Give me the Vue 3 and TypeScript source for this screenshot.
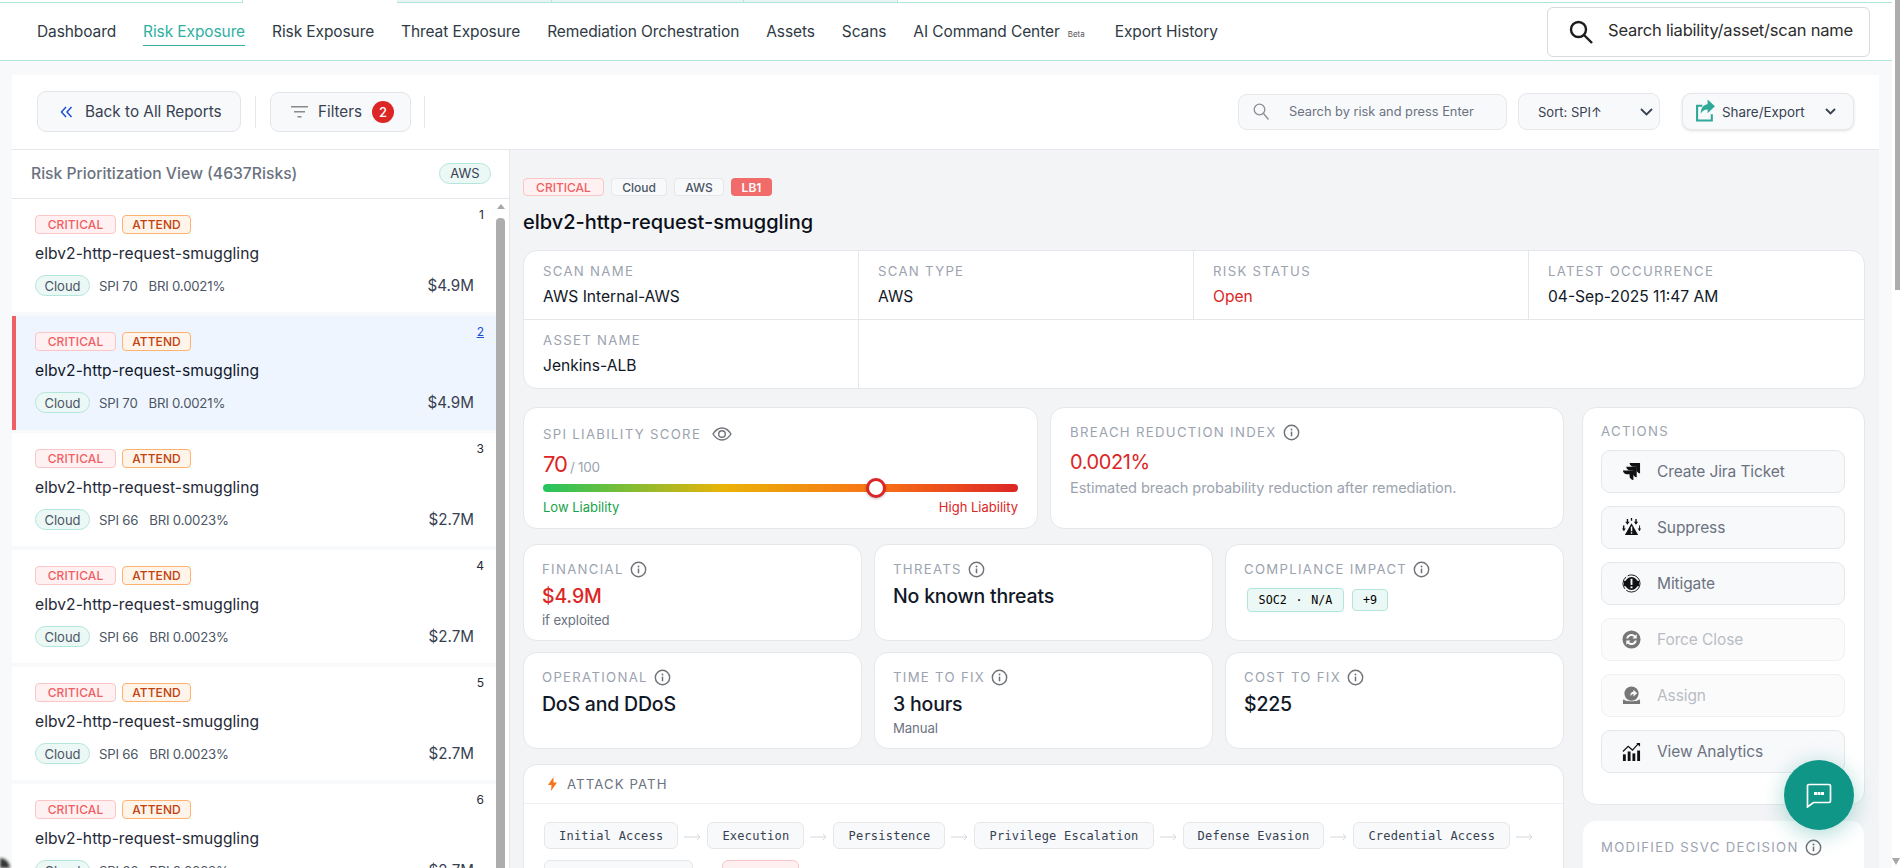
<script setup lang="ts">
interface Risk { n: number; spi: number; bri: string; price: string; active?: boolean }
const navs = ['Risk Exposure', 'Threat Exposure', 'Remediation Orchestration', 'Assets', 'Scans']
const risks: Risk[] = [
  { n: 1, spi: 70, bri: '0.0021%', price: '$4.9M' },
  { n: 2, spi: 70, bri: '0.0021%', price: '$4.9M', active: true },
  { n: 3, spi: 66, bri: '0.0023%', price: '$2.7M' },
  { n: 4, spi: 66, bri: '0.0023%', price: '$2.7M' },
  { n: 5, spi: 66, bri: '0.0023%', price: '$2.7M' },
  { n: 6, spi: 66, bri: '0.0023%', price: '$2.7M' },
]
const info = [
  { k: 'SCAN NAME', v: 'AWS Internal-AWS' },
  { k: 'SCAN TYPE', v: 'AWS' },
  { k: 'RISK STATUS', v: 'Open', red: true },
  { k: 'LATEST OCCURRENCE', v: '04-Sep-2025 11:47 AM' },
]
const actions = [
  { t: 'Create Jira Ticket', i: 'i-jira' },
  { t: 'Suppress', i: 'i-suppress' },
  { t: 'Mitigate', i: 'i-mitigate' },
  { t: 'Force Close', i: 'i-close', off: true },
  { t: 'Assign', i: 'i-assign', off: true },
  { t: 'View Analytics', i: 'i-chart' },
]
const chain = ['Initial Access', 'Execution', 'Persistence', 'Privilege Escalation', 'Defense Evasion', 'Credential Access']
const spi = 70
</script>

<template>
  <div class="page">
    <svg class="sprite" aria-hidden="true">
      <symbol id="i-info" viewBox="0 0 18 18">
        <circle cx="9" cy="9" r="7.6" fill="none" stroke="currentColor" stroke-width="1.5" />
        <rect x="8.2" y="8" width="1.6" height="5" fill="currentColor" />
        <circle cx="9" cy="5.8" r="1" fill="currentColor" />
      </symbol>
      <symbol id="i-jira" viewBox="0 0 20 20">
        <path d="M8 1h11v11c-2 0-4-2-4-4V5h-3C10 5 8 3 8 1Z" />
        <path d="M4.500 5h11v11c-2 0-4-2-4-4V9h-3C6.500 9 4.500 7 4.500 5Z" />
        <path d="M1 9h11v10c-2 0-4-2-4-4v-2H5C3 13 1 11 1 9Z" />
      </symbol>
      <symbol id="i-suppress" viewBox="0 0 20 20">
        <path d="M10 5.500 17 18H3Z" />
        <rect x="9.300" y="9" width="1.500" height="5" fill="#f8f9fb" />
        <rect x="9.300" y="15" width="1.500" height="1.500" fill="#f8f9fb" />
        <path d="M5 1h1.500v3H8L5.700 7 3.500 4H5ZM14 1h1.500v3H17l-2.300 3-2.200-3H14ZM9.300 0h1.400v3H9.300ZM1 8h1.500v3H4l-2 3-2-3h1ZM18 8h1v3h1l-1.500 3-2-3H18Z" />
      </symbol>
      <symbol id="i-mitigate" viewBox="0 0 20 20">
        <circle cx="10" cy="10" r="9" fill="none" stroke="currentColor" stroke-width="1" stroke-dasharray="20 2 14 2" />
        <circle cx="10" cy="10" r="6.800" />
        <rect x="2" y="7" width="3" height="6" rx="1" />
        <rect x="15" y="7" width="3" height="6" rx="1" />
        <rect x="9" y="5" width="2" height="6.500" fill="#f8f9fb" />
        <rect x="9" y="13" width="2" height="2" fill="#f8f9fb" />
      </symbol>
      <symbol id="i-close" viewBox="0 0 20 20">
        <circle cx="10" cy="10" r="9.500" />
        <path d="M4.500 9A5.600 5.600 0 0 1 14 5.800L15.500 4.500V9H11l1.600-1.700A3.700 3.700 0 0 0 6.500 9ZM15.500 11A5.600 5.600 0 0 1 6 14.200L4.500 15.500V11H9l-1.600 1.700A3.700 3.700 0 0 0 13.500 11Z" fill="#fbfbfc" />
      </symbol>
      <symbol id="i-assign" viewBox="0 0 20 20">
        <circle cx="10" cy="8" r="7.500" />
        <path d="M9 11V8.800C9 7 10.500 6 12 6V4l4 3.500-4 3.500V8.500c-1.300 0-2 .8-3 2.500Z" fill="#fbfbfc" />
        <path d="M2 14c1 1.500 3 2 8 2s7-.5 8-2l1 1v4H1v-4Z" />
      </symbol>
      <symbol id="i-chart" viewBox="0 0 20 20">
        <rect x="1" y="13" width="3" height="7" />
        <rect x="6" y="10" width="3" height="10" />
        <rect x="11" y="12" width="3" height="8" />
        <rect x="16" y="9" width="3" height="11" />
        <path d="M1 10 6.500 4.500 11 8.500 17 2" fill="none" stroke="currentColor" stroke-width="1.300" />
        <path d="M15 1h4v4Z" />
      </symbol>
    </svg>

    <div class="app">
      <div class="strip">
        <span class="seg s1"></span><span class="seg s2"></span><span class="seg s3"></span>
        <span class="seg s4"></span><span class="seg s5"></span><span class="seg s6"></span>
      </div>

      <header class="topbar">
        <nav class="nav">
          <a>Dashboard</a>
          <a class="on">Risk Exposure</a>
          <a v-for="item in navs" :key="item">{{ item }}</a>
          <a>AI Command Center<small>Beta</small></a>
          <a>Export History</a>
        </nav>
        <div class="globalsearch">
          <svg width="26" height="26" viewBox="0 0 26 26" fill="none" stroke="#1c1c1c" stroke-width="2.400">
            <circle cx="10.500" cy="10.500" r="7.500" />
            <path d="m16 16 8 8" />
          </svg>
          <span>Search liability/asset/scan name</span>
        </div>
      </header>

      <div class="shell">
        <section class="panel">
          <div class="toolbar">
            <button class="tbtn back">
              <svg width="13" height="12" viewBox="0 0 13 12" fill="none" stroke="#1d4ed8" stroke-width="1.500">
                <path d="M6 1 1.500 6 6 11M11.500 1 7 6l4.500 5" />
              </svg>
              Back to All Reports
            </button>
            <span class="vr"></span>
            <button class="tbtn filters">
              <svg width="17" height="12" viewBox="0 0 17 12" fill="#8a8a8a">
                <rect width="17" height="1.500" /><rect x="3" y="5" width="11" height="1.500" /><rect x="6.500" y="10" width="4" height="1.500" />
              </svg>
              Filters
              <b class="count">2</b>
            </button>
            <span class="vr vr2"></span>
            <span class="grow"></span>
            <div class="risksearch">
              <svg width="16" height="17" viewBox="0 0 16 17" fill="none" stroke="#8b8f96" stroke-width="1.300">
                <circle cx="6.500" cy="6.500" r="5.300" /><path d="m10.500 10.500 5 6" />
              </svg>
              <span>Search by risk and press Enter</span>
            </div>
            <div class="sort">
              <span>Sort: SPI↑</span>
              <svg width="13" height="8" viewBox="0 0 13 8" fill="none" stroke="#374151" stroke-width="1.800"><path d="m1 1 5.500 5.500L12 1" /></svg>
            </div>
            <div class="share">
              <svg class="shareicon" width="21" height="23" viewBox="0 0 20 21">
                <path d="M1 5h6v2H3v12h12v-5h2v7H1Z" fill="#2fa897" />
                <path d="M12 0l7 6.500-7 6.500V9.500c-3 0-5 1-6.500 4C5.500 8 8 5 12 4.500Z" fill="#2fa897" />
              </svg>
              <span>Share/Export</span>
              <svg width="11" height="7" viewBox="0 0 11 7" fill="none" stroke="#374151" stroke-width="1.800"><path d="m1 1 4.500 4.500L10 1" /></svg>
            </div>
          </div>

          <div class="split">
            <aside class="side">
              <div class="sidehead">
                <span>Risk Prioritization View (4637Risks)</span>
                <em class="awspill">AWS</em>
              </div>
              <div class="sidebody">
                <div class="list">
                  <article v-for="r in risks" :key="r.n" class="item" :class="{ active: r.active }">
                    <div class="itemtop">
                      <span class="b-crit">CRITICAL</span>
                      <span class="b-att">ATTEND</span>
                      <span class="num">{{ r.n }}</span>
                    </div>
                    <div class="itemtitle">elbv2-http-request-smuggling</div>
                    <div class="itemfoot">
                      <span class="cloud">Cloud</span>
                      <span class="meta spi">SPI {{ r.spi }}</span>
                      <span class="meta">BRI {{ r.bri }}</span>
                      <span class="price">{{ r.price }}</span>
                    </div>
                  </article>
                </div>
                <div class="listbar"><i class="up"></i><i class="thumb"></i></div>
              </div>
            </aside>

            <main class="detail">
              <div class="tags">
                <span class="t-crit">CRITICAL</span>
                <span class="t-plain">Cloud</span>
                <span class="t-plain">AWS</span>
                <span class="t-lb">LB1</span>
              </div>
              <h1>elbv2-http-request-smuggling</h1>

              <div class="infotable">
                <div v-for="c in info" :key="c.k" class="cell">
                  <label>{{ c.k }}</label>
                  <p :class="{ red: c.red }">{{ c.v }}</p>
                </div>
                <div class="cell last">
                  <label>ASSET NAME</label>
                  <p>Jenkins-ALB</p>
                </div>
                <div class="cell rest"></div>
              </div>

              <div class="columns">
                <div class="leftcol">
                  <div class="row2">
                    <div class="card spicard">
                      <div class="lab">SPI LIABILITY SCORE
                        <svg class="eye" width="20" height="14" viewBox="0 0 20 14" fill="none" stroke="#6f7277" stroke-width="1.400">
                          <path d="M1 7c2.500-4 5.500-6 9-6s6.500 2 9 6c-2.500 4-5.500 6-9 6s-6.500-2-9-6Z" /><circle cx="10" cy="7" r="3.300" />
                        </svg>
                      </div>
                      <div class="score"><b>70</b><span>/ 100</span></div>
                      <div class="gauge"><i class="knob" :style="{ left: spi + '%' }"></i></div>
                      <div class="gaugelab"><span class="low">Low Liability</span><span class="high">High Liability</span></div>
                    </div>
                    <div class="card bricard">
                      <div class="lab">BREACH REDUCTION INDEX <svg class="inf"><use href="#i-info" /></svg></div>
                      <div class="brival">0.0021%</div>
                      <p class="bridesc">Estimated breach probability reduction after remediation.</p>
                    </div>
                  </div>

                  <div class="row3 first">
                    <div class="card mini">
                      <div class="lab">FINANCIAL <svg class="inf"><use href="#i-info" /></svg></div>
                      <div class="val red2">$4.9M</div>
                      <div class="sub">if exploited</div>
                    </div>
                    <div class="card mini">
                      <div class="lab">THREATS <svg class="inf"><use href="#i-info" /></svg></div>
                      <div class="val">No known threats</div>
                    </div>
                    <div class="card mini">
                      <div class="lab">COMPLIANCE IMPACT <svg class="inf"><use href="#i-info" /></svg></div>
                      <div class="comp"><span class="c1">SOC2 · N/A</span><span class="c2">+9</span></div>
                    </div>
                  </div>
                  <div class="row3 second">
                    <div class="card mini">
                      <div class="lab">OPERATIONAL <svg class="inf"><use href="#i-info" /></svg></div>
                      <div class="val">DoS and DDoS</div>
                    </div>
                    <div class="card mini">
                      <div class="lab">TIME TO FIX <svg class="inf"><use href="#i-info" /></svg></div>
                      <div class="val">3 hours</div>
                      <div class="sub">Manual</div>
                    </div>
                    <div class="card mini">
                      <div class="lab">COST TO FIX <svg class="inf"><use href="#i-info" /></svg></div>
                      <div class="val">$225</div>
                    </div>
                  </div>

                  <div class="card attack">
                    <div class="attackhead">
                      <svg width="9" height="14" viewBox="0 0 9 14"><path d="M5.500 0 0 8h3.500L3 14l6-8.500H5.500Z" fill="#f97316" /></svg>
                      ATTACK PATH
                    </div>
                    <div class="chain">
                      <template v-for="c in chain" :key="c">
                        <span class="node">{{ c }}</span>
                        <svg class="arr" width="17" height="8" viewBox="0 0 17 8" fill="none" stroke="#d5d8dc"><path d="M0 4h16M13 1l3 3-3 3" /></svg>
                      </template>
                      <span class="node">Lateral Movement</span>
                      <svg class="arr" width="17" height="8" viewBox="0 0 17 8" fill="none" stroke="#d5d8dc"><path d="M0 4h16M13 1l3 3-3 3" /></svg>
                      <span class="node impact">Impact</span>
                    </div>
                  </div>
                </div>

                <div class="rightcol">
                  <div class="card actions">
                    <div class="lab">ACTIONS</div>
                    <button v-for="a in actions" :key="a.t" class="act" :class="{ off: a.off }">
                      <svg class="acticon"><use :href="'#' + a.i" /></svg>
                      {{ a.t }}
                    </button>
                  </div>
                  <div class="card ssvc">
                    <div class="lab">MODIFIED SSVC DECISION <svg class="inf"><use href="#i-info" /></svg></div>
                  </div>
                </div>
              </div>
            </main>
          </div>
        </section>
      </div>
    </div>

    <div class="pagebar">
      <i class="pthumb"></i>
      <i class="pdown"></i>
    </div>

    <button class="fab" aria-label="Chat">
      <svg width="26" height="25" viewBox="0 0 26 25" fill="none" stroke="#fff" stroke-width="1.700">
        <path d="M3 1.500h20a1.500 1.500 0 0 1 1.500 1.500v15a1.500 1.500 0 0 1-1.500 1.500H7.500L1.500 24V3A1.500 1.500 0 0 1 3 1.500Z" />
        <path d="M8 10.500h10" stroke-width="3.200" stroke-dasharray="3 .5" />
      </svg>
    </button>
    <i class="corner"></i>
  </div>
</template>

<style>
html, body { margin: 0; overflow: hidden; background: #fff; }
</style>

<style scoped>
.page {
  position: relative;
  display: flex;
  width: 1900px;
  height: 868px;
  overflow: hidden;
  font-family: Inter, "Liberation Sans", sans-serif;
  color: #111827;
}
.sprite { display: none; }
.app { width: 1892px; display: flex; flex-direction: column; background: #f8f9fa; }

.strip { display: flex; height: 3px; background: #fff; }
.seg { display: block; box-sizing: border-box; border-bottom: 1px solid #b3e6db; }
.s1 { width: 243px; border-right: 1px solid #b3e6db; }
.s2 { width: 154px; border-bottom: 0; }
.s3 { width: 155px; background: #e9f5f2; border-right: 1px solid #b3e6db; }
.s4 { width: 192px; background: #e9f5f2; border-right: 1px solid #b3e6db; }
.s5 { width: 154px; background: #e9f5f2; border-right: 1px solid #b3e6db; }
.s6 { flex: 1; }

.topbar {
  height: 58px;
  box-sizing: border-box;
  background: #fff;
  border-bottom: 1px solid #b3e6db;
  display: flex;
  align-items: flex-start;
  padding: 4px 22px 0 37px;
  justify-content: space-between;
}
.nav { display: flex; gap: 27px; margin-top: 15px; font-size: 15.500px; color: #2f3a44; letter-spacing: -.1px; }
.nav a { display: block; height: 23px; line-height: 19px; white-space: nowrap; }
.nav a.on { color: #2fb0a0; border-bottom: 1px solid #2fb0a0; }
.nav small { font-size: 8px; margin-left: 8px; margin-right: 3px; color: #555; letter-spacing: 0; }
.globalsearch {
  width: 323px;
  height: 50px;
  box-sizing: border-box;
  border: 1px solid #d8dadd;
  border-radius: 6px;
  display: flex;
  align-items: center;
  gap: 14px;
  padding: 0 0 0 20px;
  font-size: 16.500px;
  letter-spacing: -.2px;
  color: #2c2c2c;
  white-space: nowrap;
}
.globalsearch span { margin-bottom: 5px; }

.shell { flex: 1; padding: 14px 13px 0 12px; min-height: 0; }
.panel { height: 100%; background: #fff; display: flex; flex-direction: column; }

.toolbar {
  height: 75px;
  box-sizing: border-box;
  border-bottom: 1px solid #e5e7eb;
  display: flex;
  align-items: center;
  padding: 0 25px 1px 25px;
  flex: none;
}
.tbtn {
  font: inherit;
  display: flex;
  align-items: center;
  background: #f8f9fb;
  border: 1px solid #e3e5ea;
  border-radius: 9px;
  color: #374151;
  padding: 0;
}
.back { width: 204px; height: 41px; gap: 12px; padding-left: 22px; font-size: 15.300px; }
.filters { width: 141px; height: 40px; gap: 10px; padding-left: 20px; font-size: 15.200px; }
.count {
  width: 22px; height: 22px; border-radius: 50%; background: #dc2626; color: #fff;
  font-size: 13px; font-weight: 500; display: flex; align-items: center; justify-content: center;
}
.vr { width: 1px; height: 32px; background: #e5e7eb; margin: 0 14px; }
.vr2 { margin-left: 13px; }
.grow { flex: 1; }
.risksearch {
  width: 269px; height: 36px; box-sizing: border-box; border: 1px solid #e5e7eb; border-radius: 9px;
  background: #f8f9fb; display: flex; align-items: center; gap: 20px; padding-left: 14px;
  font-size: 12.800px; color: #6b7280;
}
.sort {
  width: 142px; height: 37px; box-sizing: border-box; margin-left: 11px; border: 1px solid #e5e7eb; border-radius: 9px;
  background: #f8f9fb; display: flex; align-items: center; justify-content: space-between; padding: 0 6px 0 19px;
  font-size: 13px; color: #374151;
}
.share {
  width: 172px; height: 37px; box-sizing: border-box; margin-left: 22px; border: 1px solid #e5e7eb; border-radius: 9px;
  background: #f8f9fb; display: flex; align-items: center; padding: 0 17px 0 12px; gap: 6px;
  font-size: 13.400px; color: #374151; box-shadow: 0 1px 3px rgba(0,0,0,.12);
}
.share span { flex: 1; }
.shareicon { flex: none; margin-top: -2px; }

.split { flex: 1; display: flex; min-height: 0; }
.side {
  width: 497px; flex: none; border-right: 1px solid #e5e7eb; display: flex; flex-direction: column; background: #fff;
}
.sidehead {
  height: 49px; box-sizing: border-box; border-bottom: 1px solid #e5e7eb; flex: none;
  display: flex; align-items: center; justify-content: space-between; padding: 0 18px 2px 19px;
  font-size: 15.700px; font-weight: 500; color: #6b7280;
}
.awspill {
  font-style: normal; font-weight: 400; font-size: 13px; color: #374151; width: 52px; height: 21px; box-sizing: border-box;
  display: flex; align-items: center; justify-content: center;
  background: #ecf8f5; border: 1px solid #b3e6db; border-radius: 11px;
}
.sidebody { flex: 1; display: flex; min-height: 0; overflow: hidden; }
.list { width: 484px; flex: none; background: #f8f9fb; }
.listbar { width: 9px; margin-right: 3px; display: flex; flex-direction: column; align-items: center; padding-top: 5px; }
.up { width: 0; height: 0; border: 4px solid transparent; border-top: 0; border-bottom: 5px solid #a8a8a8; }
.thumb { flex: 1; width: 9px; margin-top: 9px; background: #adadad; border-radius: 4px 4px 0 0; }

.item {
  height: 113px; box-sizing: border-box; margin-bottom: 4px; background: #fff; padding: 16px 12px 0 23px;
}
.item.active { background: #eff5fe; border-left: 4px solid #ef5f63; padding-left: 19px; margin-top: 3px; margin-bottom: 3px; height: 114px; }
.itemtop { display: flex; align-items: flex-start; gap: 6px; font-size: 12px; font-weight: 500; }
.b-crit, .b-att { height: 19px; box-sizing: border-box; border-radius: 4px; display: flex; align-items: center; justify-content: center; letter-spacing: .1px; }
.b-crit { width: 81px; color: #ef5f63; background: #fff1f1; border: 1px solid #fcc5c6; }
.b-att { width: 69px; color: #c2410c; background: #fff4ea; border: 1px solid #fdb26f; }
.num { margin-left: auto; margin-top: -7px; font-size: 12px; font-weight: 400; color: #1f2937; line-height: 14px; }
.active .num { color: #1d4ed8; text-decoration: underline; }
.itemtitle { margin-top: 10px; font-size: 15.600px; line-height: 20px; color: #1f2937; letter-spacing: .05px; }
.active .itemtitle { color: #0f172a; }
.itemfoot { display: flex; align-items: center; margin-top: 11px; padding-right: 10px; font-size: 13px; color: #4b5563; }
.cloud {
  width: 55px; height: 21px; box-sizing: border-box; display: flex; align-items: center; justify-content: center; font-size: 13px;
  background: #ecf8f5; border: 1px solid #b3e6db; border-radius: 11px;
}
.meta { margin-left: 11px; font-size: 13.200px; letter-spacing: -.2px; }
.meta.spi { margin-left: 9px; }
.price { margin-left: auto; font-size: 15.200px; color: #374151; }

.detail { flex: 1; min-width: 0; background: #f3f4f6; padding: 28px 14px 0 13px; overflow: hidden; }
.tags { display: flex; gap: 7px; align-items: center; font-size: 12px; height: 18px; font-weight: 500; }
.tags span { box-sizing: border-box; height: 18px; display: flex; align-items: center; justify-content: center; border-radius: 4px; }
.t-crit { width: 81px; color: #ef5f63; background: #fff1f1; border: 1px solid #fcc5c6; }
.t-plain { color: #4b5563; background: #f8f9fb; border: 1px solid #e5e7eb; padding: 0 10px; }
.t-plain:nth-child(2) { width: 56px; }
.t-plain:nth-child(3) { width: 50px; }
.t-lb { width: 41px; background: #f26b6b; color: #fff; font-weight: 600; }
h1 { margin: 14px 0 0; font-size: 20px; line-height: 24px; font-weight: 500; color: #0b0f19; }

.infotable {
  margin-top: 16px;
  height: 139px; box-sizing: border-box;
  background: #fff; border: 1px solid #e5e7eb; border-radius: 14px;
  display: grid; grid-template-columns: repeat(4, 1fr); grid-template-rows: 1fr 1fr; overflow: hidden;
}
.cell { padding: 11px 19px 0; border-right: 1px solid #e5e7eb; border-bottom: 1px solid #e5e7eb; box-sizing: border-box; }
.cell:nth-child(4) { border-right: 0; }
.cell.last { border-bottom: 0; }
.cell.rest { grid-column: 2 / 5; border: 0; }
.cell label { display: block; font-size: 13.200px; letter-spacing: 1.300px; color: #9ca3af; line-height: 18px; }
.cell p { margin: 7px 0 0; font-size: 15.600px; line-height: 20px; color: #111827; }
.cell p.red { color: #dc2626; }

.columns { display: flex; gap: 18px; margin-top: 18px; }
.leftcol { width: 1041px; flex: none; }
.rightcol { flex: 1; min-width: 0; }
.card { background: #fff; border: 1px solid #e5e7eb; border-radius: 14px; box-sizing: border-box; }
.lab { font-size: 13.200px; letter-spacing: 1.300px; color: #9ca3af; display: flex; align-items: center; gap: 6px; line-height: 18px; white-space: nowrap; }
.inf { width: 17px; height: 17px; color: #6f7277; }
.eye { margin-left: 5px; }
.row2 { display: grid; grid-template-columns: 515px 514px; gap: 12px; height: 122px; }
.spicard { padding: 17px 19px 0; }
.score { margin-top: 7px; display: flex; align-items: baseline; gap: 3px; line-height: 28px; }
.score b { font-size: 22px; font-weight: 400; color: #dc2626; letter-spacing: -1px; }
.score span { font-size: 13.500px; color: #9ca3af; letter-spacing: -.3px; }
.gauge {
  position: relative; height: 8px; margin-top: 3px; border-radius: 4px;
  background: linear-gradient(90deg, #22c55e 0%, #eab308 38%, #f97316 70%, #dc2626 100%);
}
.knob {
  position: absolute; top: -6px; margin-left: -10px; width: 20px; height: 20px; box-sizing: border-box;
  border: 3px solid #dc2626; background: #fff; border-radius: 50%; box-shadow: 0 1px 3px rgba(0,0,0,.25);
}
.gaugelab { display: flex; justify-content: space-between; font-size: 13px; margin-top: 6px; line-height: 18px; }
.low { color: #16a34a; }
.high { color: #dc2626; }
.bricard { padding: 15px 19px 0; }
.brival { margin-top: 7px; font-size: 20px; line-height: 28px; color: #dc2626; letter-spacing: -.4px; }
.bridesc { margin: 2px 0 0; font-size: 14.600px; color: #9ca3af; line-height: 20px; letter-spacing: -.1px; }

.row3 { display: grid; grid-template-columns: repeat(3, 1fr); gap: 12px; height: 97px; }
.first { margin-top: 15px; }
.second { margin-top: 11px; }
.mini { padding: 15px 18px 0; }
.val { margin-top: 4px; font-size: 19.500px; line-height: 28px; font-weight: 500; color: #111827; letter-spacing: -.2px; }
.red2 { color: #dc2626; }
.sub { margin-top: 2px; font-size: 13.200px; line-height: 16px; color: #6b7280; letter-spacing: -.1px; }
.comp { display: flex; align-items: center; gap: 8px; margin: 10px 0 0 3px; font-family: "DejaVu Sans Mono", monospace; font-size: 11.700px; color: #000; }
.c1, .c2 { display: flex; align-items: center; justify-content: center; box-sizing: border-box; background: #ecf8f5; border: 1px solid #b3e6db; border-radius: 4px; white-space: pre; }
.c1 { width: 97px; height: 24px; word-spacing: 1.700px; }
.c2 { width: 36px; height: 22px; }

.attack { margin-top: 15px; height: 200px; }
.attackhead { height: 39px; box-sizing: border-box; border-bottom: 1px solid #eef0f2; display: flex; align-items: center; gap: 10px; padding: 0 0 0 24px; font-size: 13.200px; letter-spacing: 1.100px; color: #6b7280; }
.chain { padding: 18px 20px 0; display: flex; flex-wrap: wrap; align-items: center; column-gap: 6px; row-gap: 11px; }
.node { height: 27px; box-sizing: border-box; padding: 0 14px; display: flex; align-items: center; background: #f8f9fb; border: 1px solid #e5e7eb; border-radius: 6px; font-family: "DejaVu Sans Mono", monospace; font-size: 12px; letter-spacing: .23px; color: #374151; white-space: nowrap; }
.arr { margin-top: 2px; flex: none; }
.impact { width: 77px; background: #fef0f0; border-color: #fcc5c6; color: #ef5f63; }

.actions { height: 398px; padding: 14px 18px 0; }
.actions .lab { margin-bottom: 10px; }
.act {
  font: inherit; width: 244px; height: 43px; box-sizing: border-box; margin-bottom: 13px; display: flex; align-items: center; gap: 16px;
  padding: 0 0 0 20px; background: #f8f9fb; border: 1px solid #e5e7eb; border-radius: 9px; font-size: 15.500px; color: #6b7280; letter-spacing: -.1px;
}
.acticon { width: 19px; height: 19px; fill: #111; color: #111; flex: none; }
.act.off { color: #b9bdc4; background: #fbfbfc; border-color: #eff0f2; }
.act.off .acticon { fill: #777; color: #777; }
.ssvc { margin-top: 15px; height: 120px; padding: 17px 18px 0; border-color: #f4f5f6; }

.pagebar { width: 8px; display: flex; flex-direction: column; align-items: flex-end; background: #fff; }
.pthumb { width: 5px; height: 290px; background: #adadad; }
.pdown { margin-top: auto; margin-bottom: 3px; width: 0; height: 0; border: 4px solid transparent; border-bottom: 0; border-top: 7px solid #a8a8a8; }

.fab {
  position: absolute; left: 1784px; top: 760px; width: 70px; height: 70px; border: 0; border-radius: 50%; background: #0f9687;
  display: flex; align-items: center; justify-content: center; box-shadow: 0 4px 22px rgba(15,150,135,.35); padding: 0;
}
.corner { position: absolute; left: 0; top: 858px; width: 10px; height: 10px; background: #333; border-top-right-radius: 10px; filter: blur(1.500px); }
</style>
